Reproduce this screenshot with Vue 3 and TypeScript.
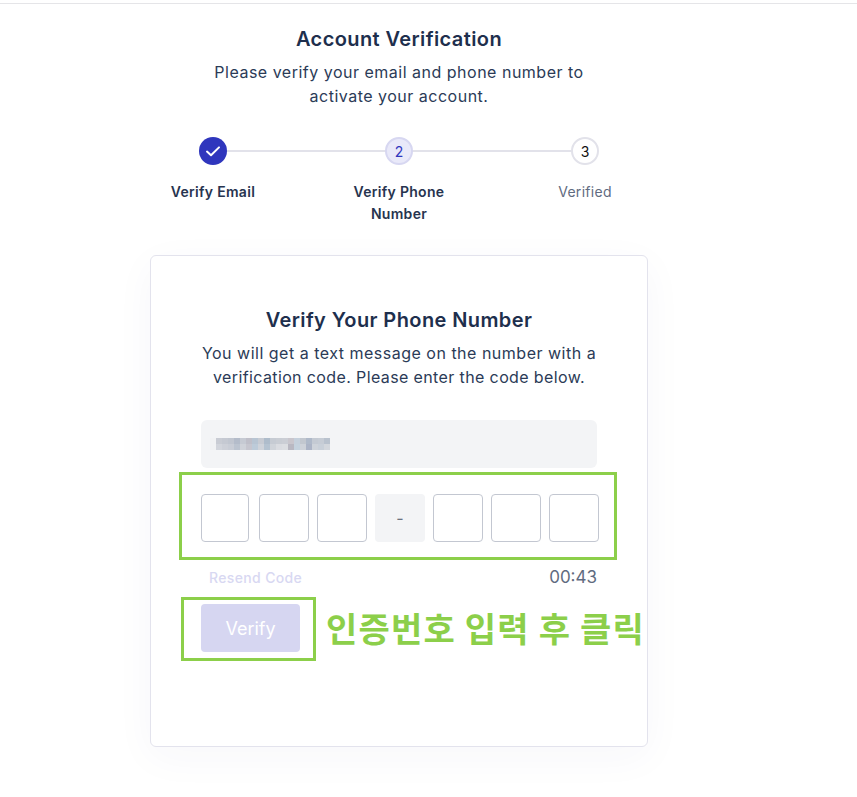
<script setup lang="ts">
const steps = [
  { key: 'done', label: 'Verify Email', mark: '' },
  { key: 'active', label: 'Verify Phone Number', mark: '2' },
  { key: 'todo', label: 'Verified', mark: '3' },
]
const mosaic: string[] = [
  '#f1f2f4','#c9ccd4','#c5c9d2','#c1c6d0','#b4bcca','#c6cad3','#bfbfc9','#b8c5d3','#c7cbd3','#aebccb','#c6cbd3','#c9cdd4','#cbced5','#c9c6cd','#c5d0dc','#c2c7cf','#afb9c9','#c4cad3','#c6ccd5','#b9c2ce',
  '#f1f2f4','#d2d5dc','#cdd0d8','#c9cdd6','#bcc4d0','#cfd2d9','#c6c6cf','#bdcbd9','#cfd3da','#b5c3d1','#d0d4da','#dadce1','#dcdee2','#b9b8c2','#c5d2de','#ced2d9','#acb4c6','#ced3da','#c9d0d9','#d3d7dd',
]
const cells = [1, 2, 3, 0, 4, 5, 6]
</script>

<template>
  <div class="page">
    <main class="content">
      <h1 class="title">Account Verification</h1>
      <p class="lead">Please verify your email and phone number to<br />activate your account.</p>

      <ol class="stepper">
        <li v-for="s in steps" :key="s.key" class="step" :class="s.key">
          <span class="dot">
            <svg v-if="s.key === 'done'" width="16" height="16" viewBox="0 0 16 16" fill="none">
              <path d="M2 8.6 6 12.2 14 4.4" stroke="#fff" stroke-width="2" stroke-linecap="round" stroke-linejoin="round" />
            </svg>
            <template v-else>{{ s.mark }}</template>
          </span>
          <span class="label">{{ s.label }}</span>
        </li>
      </ol>

      <section class="card">
        <h2 class="card-title">Verify Your Phone Number</h2>
        <p class="card-text">You will get a text message on the number with a<br /><span class="tight">verification code. Please enter the code below.</span></p>

        <div class="phone">
          <div class="mosaic">
            <i v-for="(c, i) in mosaic" :key="i" :style="{ background: c }"></i>
          </div>
        </div>

        <div class="code">
          <template v-for="(c, i) in cells" :key="i">
            <span v-if="c === 0" class="sep">-</span>
            <span v-else class="box" :class="{ first: c === 1 }"></span>
          </template>
          <span class="mark mark-code"></span>
        </div>

        <div class="meta">
          <span class="resend">Resend Code</span>
          <span class="timer">00:43</span>
        </div>

        <div class="action">
          <button class="verify" type="button">Verify</button>
          <span class="mark mark-btn"></span>
          <span class="note">인증번호 입력 후 클릭</span>
        </div>
      </section>
    </main>
  </div>
</template>

<style>
html, body { margin: 0; background: #fff; }
</style>

<style scoped>
.page {
  width: 857px;
  height: 797px;
  overflow: hidden;
  background: #fff;
  box-sizing: border-box;
  padding-top: 3px;
  font-family: Inter, "Liberation Sans", sans-serif;
  color: #1e2f4d;
}
.content {
  border-top: 1px solid #e5e5e8;
  padding-right: 59px;
  display: flex;
  flex-direction: column;
  align-items: center;
}
.title {
  margin: 20px 0 0;
  font-size: 20px;
  line-height: 30px;
  font-weight: 600;
  letter-spacing: 0.4px;
}
.lead {
  margin: 6px 0 0;
  font-size: 16px;
  line-height: 24px;
  letter-spacing: 0.5px;
  text-align: center;
  color: #2b3b57;
}
.stepper {
  list-style: none;
  margin: 29px 0 0;
  padding: 0;
  display: grid;
  grid-template-columns: repeat(3, 186px);
}
.step {
  position: relative;
  display: flex;
  flex-direction: column;
  align-items: center;
}
.step:not(:last-child)::after {
  content: "";
  position: absolute;
  top: 13px;
  left: 50%;
  width: 100%;
  height: 2px;
  background: #e2e2ea;
}
.dot {
  position: relative;
  z-index: 1;
  box-sizing: border-box;
  width: 28px;
  height: 28px;
  border-radius: 50%;
  display: flex;
  align-items: center;
  justify-content: center;
  font-size: 14px;
}
.done .dot { background: #2f36bd; }
.active .dot { background: #e9e9f9; border: 2px solid #d7d7f1; color: #2f36bd; }
.todo .dot { background: #fff; border: 2px solid #e2e2ea; color: #111; }
.label {
  margin-top: 16px;
  width: 110px;
  font-size: 14px;
  line-height: 22px;
  font-weight: 600;
  letter-spacing: 0.3px;
  text-align: center;
  color: #27344f;
}
.todo .label { font-weight: 400; color: #5f6b80; }
.card {
  box-sizing: border-box;
  width: 498px;
  height: 492px;
  margin-top: 30px;
  padding: 49px 50px 0;
  border: 1px solid #e3e3ed;
  border-radius: 6px;
  background: #fff;
  box-shadow: 0 10px 40px rgba(60, 60, 120, 0.04);
  display: flex;
  flex-direction: column;
  align-items: stretch;
}
.card-title {
  margin: 0;
  font-size: 20px;
  line-height: 30px;
  font-weight: 600;
  letter-spacing: 0.4px;
  text-align: center;
  color: #1e2f4d;
}
.card-text {
  margin: 6px 0 0;
  font-size: 16px;
  line-height: 24px;
  letter-spacing: 0.5px;
  text-align: center;
  color: #2b3b57;
}
.tight { letter-spacing: 0.38px; }
.phone {
  width: 396px;
  height: 48px;
  margin-top: 31px;
  box-sizing: border-box;
  padding: 18px 0 0 9px;
  background: #f3f4f6;
  border-radius: 6px;
}
.mosaic {
  display: grid;
  grid-template-columns: repeat(20, 6px);
  grid-auto-rows: 6px;
}
.code {
  position: relative;
  display: flex;
  width: 398px;
  gap: 8px;
  margin-top: 26px;
}
.box, .sep {
  box-sizing: border-box;
  width: 50px;
  height: 48px;
  border-radius: 4px;
}
.box { border: 1px solid #c3c7d1; background: #fff; }
.box.first { width: 48px; margin-right: 2px; }
.sep {
  background: #f3f4f6;
  display: flex;
  align-items: center;
  justify-content: center;
  font-size: 16px;
  color: #6b7280;
}
.mark {
  position: absolute;
  box-sizing: border-box;
  border: 3px solid #8ccf4a;
  pointer-events: none;
}
.mark-code { left: -22px; top: -22px; width: 438px; height: 88px; }
.meta {
  width: 396px;
  margin-top: 25px;
  display: flex;
  justify-content: space-between;
  align-items: center;
  height: 20px;
}
.resend {
  margin-left: 8px;
  font-size: 14px;
  font-weight: 500;
  letter-spacing: 0.35px;
  color: #d8d8f2;
}
.timer { font-size: 17px; color: #5f6b80; }
.action {
  position: relative;
  margin-top: 17px;
  display: flex;
  align-items: center;
}
.verify {
  flex: none;
  width: 99px;
  height: 48px;
  border: 0;
  border-radius: 4px;
  background: #d6d6f1;
  color: #fff;
  font: 400 18px Inter, "Liberation Sans", sans-serif;
}
.mark-btn { left: -20px; top: -7px; width: 135px; height: 64px; }
.note {
  flex: none;
  margin-left: 26px;
  font-family: "Noto Sans CJK KR", sans-serif;
  font-size: 34px;
  line-height: 48px;
  font-weight: 700;
  letter-spacing: 1.2px;
  white-space: nowrap;
  color: #8ccf4a;
}
</style>
